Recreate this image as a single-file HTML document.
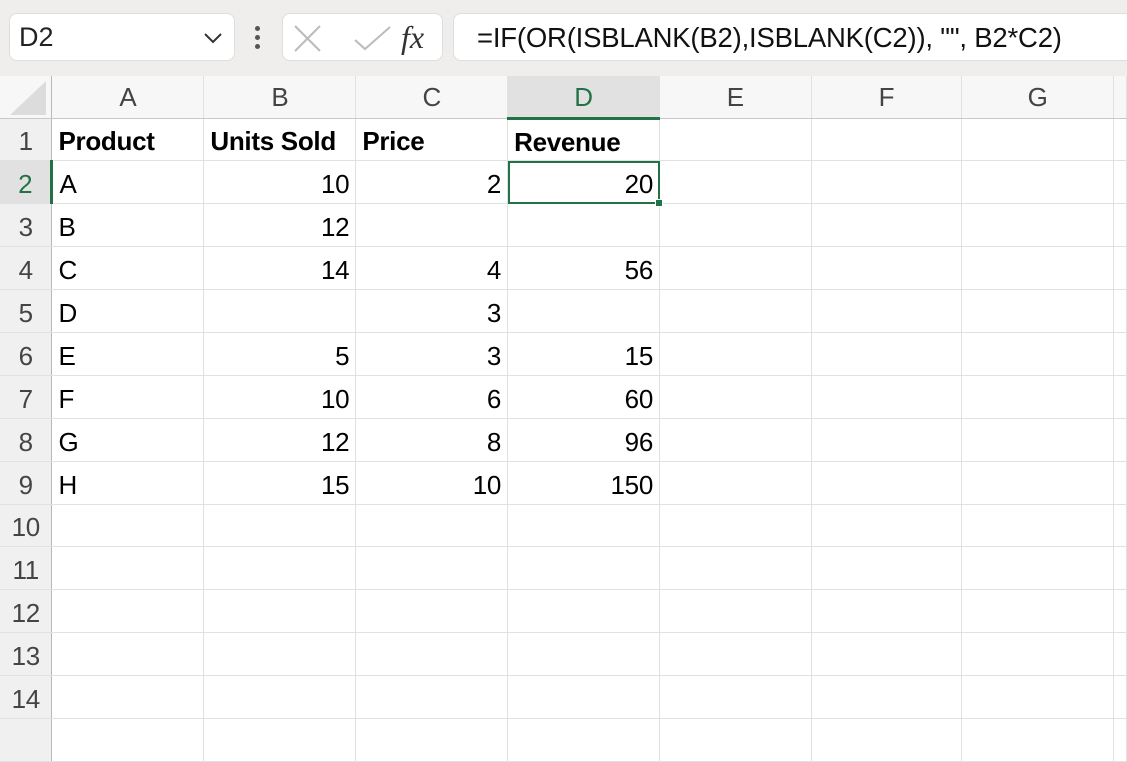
<!DOCTYPE html>
<html><head><meta charset="utf-8"><style>
*{margin:0;padding:0;box-sizing:border-box}
body{width:1127px;height:731px;overflow:hidden;background:#fff;font-family:"Liberation Sans",Arial,sans-serif;position:relative}
.top{position:absolute;left:0;top:0;width:1127px;height:76px;background:#f0eeec}
.box{position:absolute;top:13px;height:48px;background:#fff;border:1px solid #e0dedc;border-radius:8px}
table{position:absolute;left:0;top:76px;border-collapse:collapse;table-layout:fixed}
td{border-right:1px solid #e1e1e1;border-bottom:1px solid #e1e1e1;height:42.9px;font-size:26px;color:#000;padding:5px 6px 0;white-space:nowrap;overflow:visible;letter-spacing:-0.3px}
tr.h td{background:#f7f7f7;color:#444;text-align:center;height:42px;border-bottom:1px solid #c8c8c8;font-size:26px;padding-top:2px}
td.rh{background:#f0f0f0;color:#444;text-align:center;padding:5px 0 0;border-right:1px solid #b8b8b8}
td.n{text-align:right}
b{font-weight:bold}
</style></head><body>
<div class="top">
 <div class="box" style="left:9px;width:226px"><span style="position:absolute;left:9px;top:8px;font-size:27px;color:#222">D2</span>
  <svg style="position:absolute;left:193px;top:18px" width="20" height="12"><path d="M2 2 L10 10 L18 2" stroke="#333" stroke-width="2" fill="none"/></svg></div>
 <div style="position:absolute;left:255px;top:26px;width:5px;height:5px;background:#555;border-radius:50%"></div>
 <div style="position:absolute;left:255px;top:35px;width:5px;height:5px;background:#555;border-radius:50%"></div>
 <div style="position:absolute;left:255px;top:44px;width:5px;height:5px;background:#555;border-radius:50%"></div>
 <div class="box" style="left:282px;width:161px">
  <svg style="position:absolute;left:10px;top:10px" width="100" height="30"><path d="M2 2 L27 27 M27 2 L2 27" stroke="#bbb" stroke-width="2" fill="none"/><path d="M62 16 L72 25 L97 3" stroke="#bbb" stroke-width="2" fill="none"/></svg>
  <span style="position:absolute;left:118px;top:5px;font-family:'Liberation Serif',serif;font-style:italic;font-size:32px;color:#333">fx</span></div>
 <div class="box" style="left:453px;width:700px"><span style="position:absolute;left:23px;top:8px;font-size:27.5px;color:#111;letter-spacing:-0.2px">=IF(OR(ISBLANK(B2),ISBLANK(C2)), "", B2*C2)</span></div>
</div>
<table>
<colgroup><col style="width:52px"><col style="width:152px"><col style="width:152px"><col style="width:152px"><col style="width:152px"><col style="width:152px"><col style="width:151px"><col style="width:152px"><col style="width:12px"></colgroup>
<tr class="h"><td class="rh" style="background:#f7f7f7;padding:0"><svg width="48" height="40" style="display:block"><path d="M46 4 L46 38 L10 38 Z" fill="#dcdcdc"/></svg></td><td>A</td><td>B</td><td>C</td><td style="background:#e1e1e1;color:#217346;border-bottom:3px solid #217346">D</td><td>E</td><td>F</td><td>G</td><td></td></tr>
<tr><td class="rh">1</td><td><b>Product</b></td><td><b>Units Sold</b></td><td><b>Price</b></td><td><b>Revenue</b></td><td></td><td></td><td></td><td></td></tr>
<tr><td class="rh" style="background:#e1e1e1;color:#217346;border-right:3px solid #217346">2</td><td>A</td><td class="n">10</td><td class="n">2</td><td class="n" style="outline:2px solid #217346;outline-offset:-2px;position:relative">20<span style="position:absolute;right:-4px;bottom:-4px;width:8px;height:8px;background:#217346;border:1px solid #fff"></span></td><td></td><td></td><td></td><td></td></tr>
<tr><td class="rh">3</td><td>B</td><td class="n">12</td><td></td><td></td><td></td><td></td><td></td><td></td></tr>
<tr><td class="rh">4</td><td>C</td><td class="n">14</td><td class="n">4</td><td class="n">56</td><td></td><td></td><td></td><td></td></tr>
<tr><td class="rh">5</td><td>D</td><td></td><td class="n">3</td><td></td><td></td><td></td><td></td><td></td></tr>
<tr><td class="rh">6</td><td>E</td><td class="n">5</td><td class="n">3</td><td class="n">15</td><td></td><td></td><td></td><td></td></tr>
<tr><td class="rh">7</td><td>F</td><td class="n">10</td><td class="n">6</td><td class="n">60</td><td></td><td></td><td></td><td></td></tr>
<tr><td class="rh">8</td><td>G</td><td class="n">12</td><td class="n">8</td><td class="n">96</td><td></td><td></td><td></td><td></td></tr>
<tr><td class="rh">9</td><td>H</td><td class="n">15</td><td class="n">10</td><td class="n">150</td><td></td><td></td><td></td><td></td></tr>
<tr><td class="rh">10</td><td></td><td></td><td></td><td></td><td></td><td></td><td></td><td></td></tr>
<tr><td class="rh">11</td><td></td><td></td><td></td><td></td><td></td><td></td><td></td><td></td></tr>
<tr><td class="rh">12</td><td></td><td></td><td></td><td></td><td></td><td></td><td></td><td></td></tr>
<tr><td class="rh">13</td><td></td><td></td><td></td><td></td><td></td><td></td><td></td><td></td></tr>
<tr><td class="rh">14</td><td></td><td></td><td></td><td></td><td></td><td></td><td></td><td></td></tr>
<tr><td class="rh"></td><td></td><td></td><td></td><td></td><td></td><td></td><td></td><td></td></tr>
</table>
</body></html>
